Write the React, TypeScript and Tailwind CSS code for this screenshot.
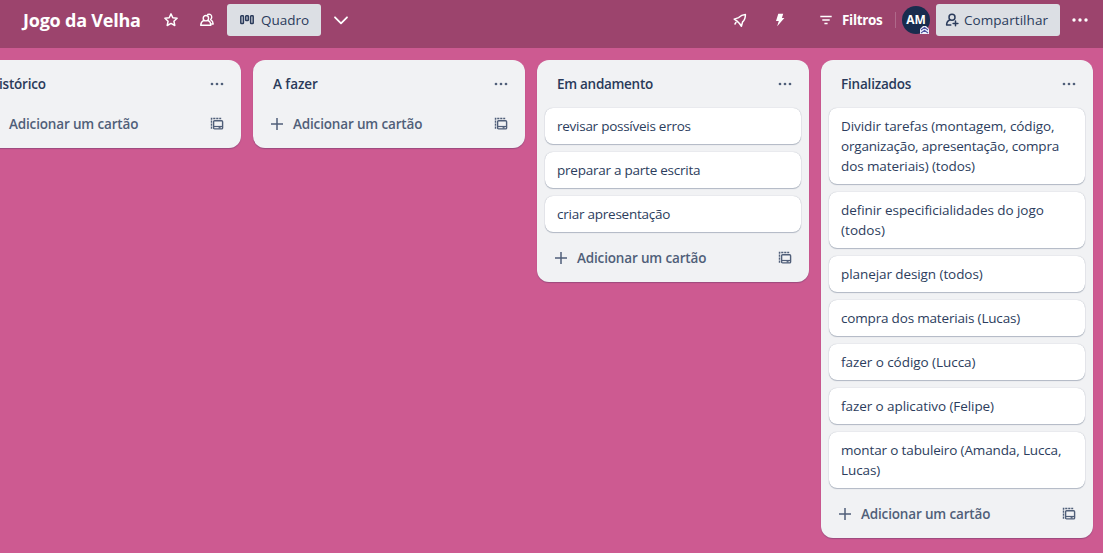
import React from "react";

type Line = { text: string; spacing: string };
type List = { title: string; titleClass: string; cards: Line[][] };

const lists: List[] = [
  { title: "Histórico", titleClass: "tracking-[-0.2px]", cards: [] },
  { title: "A fazer", titleClass: "tracking-[-0.05px]", cards: [] },
  {
    title: "Em andamento",
    titleClass: "tracking-[-0.29px]",
    cards: [
      [{ text: "revisar possíveis erros", spacing: "tracking-[-0.26px]" }],
      [{ text: "preparar a parte escrita", spacing: "tracking-[-0.24px]" }],
      [{ text: "criar apresentação", spacing: "tracking-[-0.24px]" }],
    ],
  },
  {
    title: "Finalizados",
    titleClass: "tracking-[-0.2px]",
    cards: [
      [
        { text: "Dividir tarefas (montagem, código,", spacing: "tracking-[-0.08px]" },
        { text: "organização, apresentação, compra", spacing: "tracking-[-0.18px]" },
        { text: "dos materiais) (todos)", spacing: "tracking-[-0.1px]" },
      ],
      [
        { text: "definir especificialidades do jogo", spacing: "tracking-[-0.06px]" },
        { text: "(todos)", spacing: "tracking-[0.05px]" },
      ],
      [{ text: "planejar design (todos)", spacing: "tracking-[-0.08px]" }],
      [{ text: "compra dos materiais (Lucas)", spacing: "tracking-[-0.18px]" }],
      [{ text: "fazer o código (Lucca)", spacing: "tracking-[-0.05px]" }],
      [{ text: "fazer o aplicativo (Felipe)", spacing: "tracking-[-0.07px]" }],
      [
        { text: "montar o tabuleiro (Amanda, Lucca,", spacing: "tracking-[-0.14px]" },
        { text: "Lucas)", spacing: "tracking-[-0.1px]" },
      ],
    ],
  },
];

function Dots({ className }: { className: string }) {
  return (
    <svg viewBox="0 0 14 14" className={className} fill="currentColor">
      <circle cx="2" cy="7" r="1.35" />
      <circle cx="7" cy="7" r="1.35" />
      <circle cx="12" cy="7" r="1.35" />
    </svg>
  );
}

function TemplateIcon() {
  return (
    <svg viewBox="0 0 14 14" className="size-3.5" fill="none" stroke="currentColor" strokeWidth="1.4">
      <path d="M1.5 11.8V1.5H11.2" strokeDasharray="2.2 0.8" />
      <rect x="3.6" y="3.7" width="9" height="8.2" rx="1" />
      <path d="M3.6 9.5h9" strokeWidth="1.2" />
      <path d="M8.6 10.8h2" />
    </svg>
  );
}

function ListColumn({ list }: { list: List }) {
  return (
    <section className="flex w-[272px] shrink-0 flex-col rounded-xl bg-[#f1f2f4] px-2 pb-2 shadow-[0_1px_1px_#091e4240]">
      <div className="flex h-12 items-center justify-between pr-[9px] pl-3">
        <h2 className={`text-[13.5px] leading-5 font-semibold whitespace-nowrap text-[#2a3a5a] ${list.titleClass}`}>
          {list.title}
        </h2>
        <Dots className="size-3.5 text-[#505f79]" />
      </div>
      {list.cards.length > 0 && (
        <ol className="mb-2.5 flex flex-col gap-2">
          {list.cards.map((lines) => (
            <li
              key={lines[0].text}
              className="rounded-lg bg-white px-3 py-2 text-[13.5px] leading-5 whitespace-nowrap text-[#2c3d5d] shadow-[0_1px_1px_#091e4240,0_0_1px_#091e424f]"
            >
              {lines.map((line) => (
                <div key={line.text} className={line.spacing}>
                  {line.text}
                </div>
              ))}
            </li>
          ))}
        </ol>
      )}
      <div className="flex h-8 items-center pr-[9px] pl-2.5 text-[#505f79]">
        <svg viewBox="0 0 12 12" className="mr-2.5 size-3" fill="none" stroke="currentColor" strokeWidth="1.5">
          <path d="M6 0v12M0 6h12" />
        </svg>
        <span className="flex-1 text-[13.5px] leading-5 font-semibold tracking-[-0.16px] whitespace-nowrap">
          Adicionar um cartão
        </span>
        <TemplateIcon />
      </div>
    </section>
  );
}

function Header() {
  return (
    <header className="flex h-12 shrink-0 items-start bg-[#9c446d] pt-1 text-white">
      <h1 className="ml-[23px] w-[140px] text-[18px] leading-[33px] font-bold tracking-[-0.22px] whitespace-nowrap">
        Jogo da Velha
      </h1>
      <div className="flex h-8 w-4 items-center">
        <svg viewBox="0 0 16 16" className="size-4" fill="none" stroke="currentColor" strokeWidth="1.5" strokeLinejoin="round">
          <path d="M8 1.9l1.8 3.9 4.3.5-3.2 2.9.9 4.3L8 11.4l-3.8 2.1.9-4.3-3.2-2.9 4.3-.5z" />
        </svg>
      </div>
      <div className="ml-5 flex h-8 w-4 items-center">
        <svg viewBox="0 0 16 16" className="size-4" fill="none" stroke="currentColor" strokeWidth="1.4" strokeLinejoin="round" strokeLinecap="round">
          <circle cx="6.9" cy="6.2" r="2.7" />
          <path d="M5 8.4c-2 .7-3.1 2.2-3.3 4.9h10.2c-.1-2.7-1.2-4.2-3.1-4.9" />
          <path d="M8.7 2.5c2.4-.9 4.3.6 4 2.9-.1 1-.5 1.7-1.1 2.2 1.7.9 2.5 2.3 2.6 4.4h-1.5" />
        </svg>
      </div>
      <button className="ml-3 flex h-8 w-[94px] items-center rounded-[3px] bg-[#dcdfe4] pl-[13px] text-[#2a3b5b]">
        <svg viewBox="0 0 14 12" className="mr-[7px] h-3 w-3.5" fill="none" stroke="currentColor" strokeWidth="1.5">
          <rect x="0.8" y="1.8" width="2.6" height="7.8" rx="0.7" />
          <rect x="5.7" y="1.8" width="2.6" height="4.8" rx="0.7" />
          <rect x="10.6" y="1.8" width="2.6" height="7.8" rx="0.7" />
        </svg>
        <span className="text-[13.5px] leading-5 font-medium">Quadro</span>
      </button>
      <div className="ml-3 flex h-8 items-center">
        <svg viewBox="0 0 16 16" className="size-4" fill="none" stroke="currentColor" strokeWidth="1.8" strokeLinecap="round" strokeLinejoin="round">
          <path d="M2 5.3L8 11.3l6-6" />
        </svg>
      </div>
      <div className="ml-auto flex h-8 items-center">
        <svg viewBox="0 0 16 16" className="size-4" fill="none" stroke="currentColor" strokeWidth="1.5" strokeLinejoin="round" strokeLinecap="round">
          <path d="M13.4 2.4C10.4 2.6 8.4 3.8 6.7 5.6L2.2 7.1l2.6 1.8 2.7 2.6 1.9 2.7 1.2-4.3c2-1.7 2.8-3.9 2.8-7.5z" />
          <path d="M4 10.4l-1 1.6" />
        </svg>
        <svg viewBox="0 0 16 16" className="ml-6 size-4" fill="currentColor">
          <path d="M6.3 1.8h4.9L9.9 6h2.5L5.2 14.2 6.8 9H4z" />
        </svg>
        <svg viewBox="0 0 12 10" className="ml-8 h-2.5 w-3" fill="none" stroke="currentColor" strokeWidth="1.4">
          <path d="M.3 1.5h11.4M2.3 5h7.4M4.4 8.5h3.2" />
        </svg>
        <span className="ml-2.5 w-[53px] text-[13.5px] leading-5 font-bold tracking-[-0.32px]">Filtros</span>
        <div className="mr-1.5 h-4 w-px bg-white/20" />
      </div>
      <div className="relative mt-0.5 flex size-7 items-center justify-center rounded-full bg-[#182c4e] text-[12px] font-bold">
        AM
        <svg viewBox="0 0 9 8" className="absolute right-px bottom-0 h-2 w-[9px]" fill="none" stroke="#4a4f9c" strokeWidth="1.1">
          <path d="M0 3L3 0h3l3 3v5H0z" fill="#eef0fb" stroke="none" />
          <path d="M1 4l3.5-2.6L8 4M1 7l3.5-2.6L8 7" />
        </svg>
      </div>
      <button className="ml-1.5 flex h-8 w-[124px] items-center rounded-[3px] bg-[#dcdfe4] pl-2 text-[#2a3b5b]">
        <svg viewBox="0 0 16 16" className="mr-1 size-4" fill="none" stroke="currentColor" strokeWidth="1.5" strokeLinecap="round" strokeLinejoin="round">
          <circle cx="8" cy="5.2" r="3" />
          <path d="M6 7.8c-2.2 1-3.4 2.7-3.4 5.3h4.2" />
          <path d="M11.5 9v4.8M9.1 11.4h4.8" />
        </svg>
        <span className="text-[13.5px] leading-5 font-medium tracking-[0.06px]">Compartilhar</span>
      </button>
      <div className="mr-[15px] ml-3 flex h-8 items-center">
        <svg viewBox="0 0 16 16" className="size-4" fill="currentColor">
          <circle cx="2" cy="8" r="1.7" />
          <circle cx="8" cy="8" r="1.7" />
          <circle cx="14" cy="8" r="1.7" />
        </svg>
      </div>
    </header>
  );
}

export default function App() {
  return (
    <div className="flex h-[553px] w-[1103px] flex-col overflow-hidden bg-[#cd5a91] font-['Open_Sans','Noto_Sans',sans-serif]">
      <Header />
      <main className="-ml-[31px] flex items-start gap-3 pt-3">
        {lists.map((list) => (
          <ListColumn key={list.title} list={list} />
        ))}
      </main>
    </div>
  );
}
